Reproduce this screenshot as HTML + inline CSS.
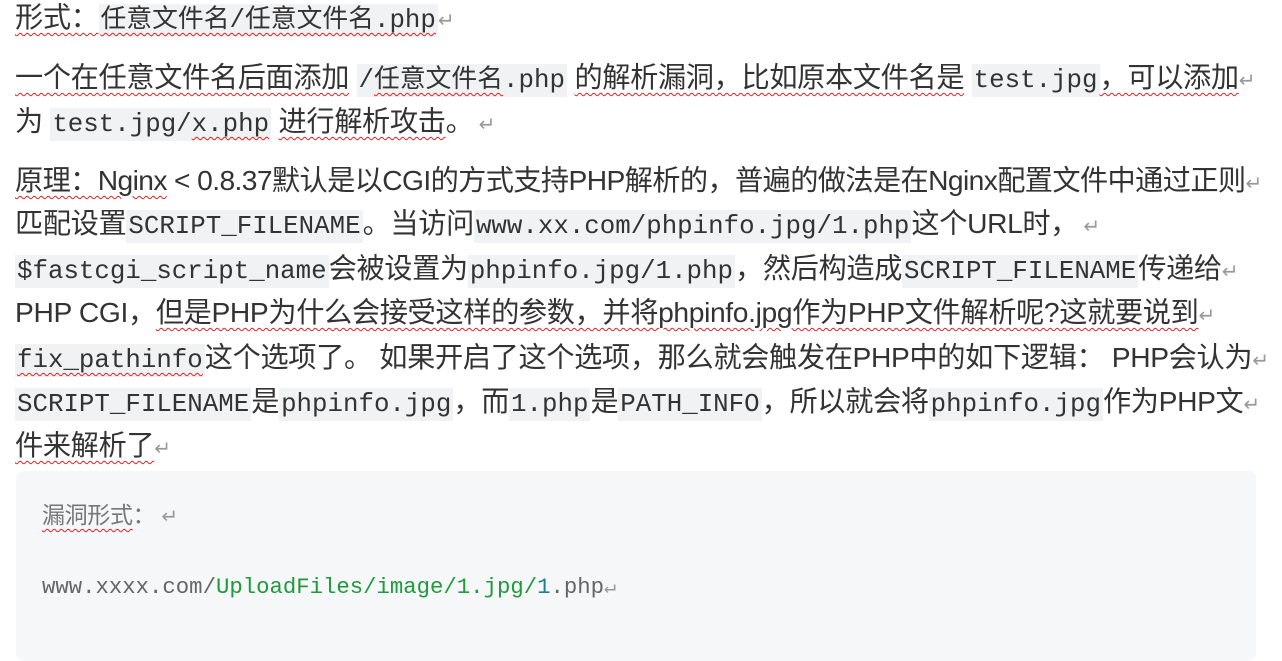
<!DOCTYPE html>
<html><head><meta charset="utf-8"><style>
html,body{margin:0;padding:0;width:1282px;height:650px;overflow:hidden;background:#fff;}
.l{position:absolute;left:15px;height:36px;line-height:36px;white-space:nowrap;font-family:"Liberation Sans","Noto Sans CJK SC",sans-serif;font-size:28.2px;color:#333;letter-spacing:-0.35px}
code{font-family:"Liberation Mono","DejaVu Sans Mono","Noto Sans CJK SC",monospace;font-size:25.8px;background:#f1f2f4;padding:2px 2px;letter-spacing:0}
.w{text-decoration:underline wavy #e02020;text-decoration-thickness:1px;text-underline-offset:5px}
.r{color:#999;font-size:20px}
.cb{position:absolute;left:16px;top:471px;width:1240px;height:190px;background:#f6f7f9;border-radius:8px}
</style></head><body>
<div class="l" style="top:-1px"><span class="w">形式：<code>任意文件名/任意文件名.php</code></span><span class="r">↵</span></div>
<div class="l" style="top:59px"><span class="w">一个在任意文件名后面添加</span> <code>/<span class="w">任意文件名</span>.php</code> <span class="w">的解析漏洞，比如原本文件名是</span> <code>test.jpg</code><span class="w">，可以添加</span><span class="r">↵</span></div>
<div class="l" style="top:103px">为 <code>test.jpg/<span class="w">x.php</span></code> <span class="w">进行解析攻击</span>。<span class="r"> ↵</span></div>
<div class="l" style="top:162px;letter-spacing:-0.6px"><span class="w">原理：Nginx</span> &lt; 0.8.37默认是以CGI的方式支持PHP解析的，普遍的做法是在Nginx配置文件中通过正则<span class="r">↵</span></div>
<div class="l" style="top:205px">匹配设置<code>SCRIPT_FILENAME</code>。当访问<code>www.xx.com/phpinfo.jpg/1.php</code>这个URL时，<span class="r"> ↵</span></div>
<div class="l" style="top:250px"><code>$fastcgi_script_name</code>会被设置为<code>phpinfo.jpg/1.php</code>，然后构造成<code>SCRIPT_FILENAME</code>传递给<span class="r">↵</span></div>
<div class="l" style="top:294px">PHP CGI，<span class="w">但是PHP为什么会接受这样的参数，并将phpinfo.jpg作为PHP文件解析呢?这就要说到</span><span class="r">↵</span></div>
<div class="l" style="top:339px"><code class="w">fix_pathinfo</code>这个选项了。 如果开启了这个选项，那么就会触发在PHP中的如下逻辑： PHP会认为<span class="r">↵</span></div>
<div class="l" style="top:383px"><code>SCRIPT_FILENAME</code>是<code>phpinfo.jpg</code>，而<code>1.php</code>是<code>PATH_INFO</code>，所以就会将<code>phpinfo.jpg</code>作为PHP文<span class="r">↵</span></div>
<div class="l" style="top:427px"><span class="w">件来解析了</span><span class="r">↵</span></div>
<div class="cb"></div>
<div class="l" style="top:497px;left:42px;color:#777;font-size:23px"><span class="w">漏洞形式</span>： <span class="r">↵</span></div>
<div class="l" style="top:569px;left:42px;font-family:'Liberation Mono','DejaVu Sans Mono',monospace;font-size:22.3px;color:#666;letter-spacing:0">www.xxxx.com/<span style="color:#1f9a3c">UploadFiles/image/1.jpg/</span><span style="color:#1f7f8f">1</span>.php<span class="r">↵</span></div>
</body></html>
